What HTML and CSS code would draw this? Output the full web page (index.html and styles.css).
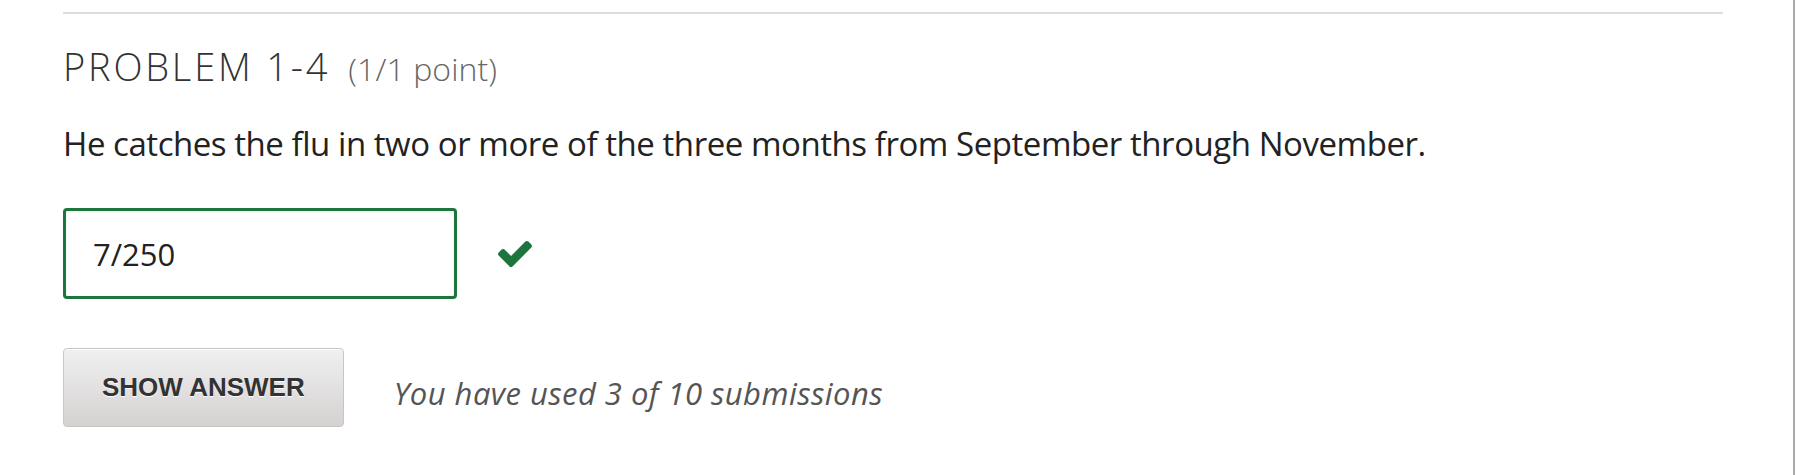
FILE: index.html
```html
<!DOCTYPE html>
<html lang="en">
<head>
<meta charset="utf-8">
<title>Problem 1-4</title>
<link rel="stylesheet" href="styles.css">
</head>
<body>
<div class="page">
  <main class="main">
    <div class="rule"></div>
    <h2 class="title">PROBLEM 1-4<span class="progress">(1/1 point)</span></h2>
    <p class="question">He catches the flu in two or more of the three months from September through November.</p>
    <div class="answer-row">
      <input class="answer-input" type="text" value="7/250">
      <svg class="check" width="34" height="26" viewBox="121 334 1550 1188" aria-hidden="true">
        <path d="M1671 566q0 40-28 68l-724 724-136 136q-28 28-68 28t-68-28l-136-136-362-362q-28-28-28-68t28-68l136-136q28-28 68-28t68 28l294 295 656-657q28-28 68-28t68 28l136 136q28 28 28 68z"/>
      </svg>
    </div>
    <div class="actions">
      <button class="btn" type="button">SHOW ANSWER</button>
      <span class="count">You have used 3 of 10 submissions</span>
    </div>
  </main>
  <div class="edge"></div>
</div>
</body>
</html>
```

FILE: styles.css
```css
html, body {
  margin: 0;
  padding: 0;
  background: #ffffff;
}

body {
  font-family: "Open Sans", "DejaVu Sans", sans-serif;
  overflow: hidden;
}

.page {
  display: flex;
  height: 475px;
}

.main {
  flex: 1;
  padding-left: 63px;
  padding-top: 12px;
}

.edge {
  width: 2px;
  background: #aaaaaa;
  margin-right: 1px;
}

.rule {
  width: 1660px;
  height: 2px;
  background: #dddddd;
}

.title {
  margin: 29px 0 0;
  font-size: 38px;
  line-height: 46px;
  font-weight: 350;
  letter-spacing: 2.8px;
  color: #333333;
}

.progress {
  margin-left: 18px;
  font-size: 32px;
  font-weight: 350;
  letter-spacing: 0.1px;
  color: #666666;
}

.question {
  margin: 32px 0 0;
  font-size: 33px;
  line-height: 40px;
  letter-spacing: -0.45px;
  color: #222222;
}

.answer-row {
  display: flex;
  align-items: center;
  gap: 41px;
  margin-top: 44px;
}

.answer-input {
  width: 394px;
  height: 91px;
  box-sizing: border-box;
  margin: 0;
  border: 3px solid #1b753c;
  border-radius: 4px;
  padding: 0 0 0 27px;
  font-family: "Open Sans", "DejaVu Sans", sans-serif;
  font-size: 31px;
  color: #222222;
  background: #ffffff;
  box-shadow: inset 0 1px 3px rgba(0, 0, 0, 0.08);
  outline: none;
}

.check {
  fill: #1b753c;
  display: block;
}

.actions {
  display: flex;
  align-items: flex-start;
  margin-top: 49px;
}

.btn {
  height: 79px;
  box-sizing: border-box;
  margin: 0;
  padding: 0 38px;
  border: 1px solid #c9c5c5;
  border-radius: 4px;
  background: linear-gradient(#f0f0f0, #d5d1d1);
  box-shadow: inset 0 1px 0 #ffffff;
  font-family: "Liberation Sans", Arial, sans-serif;
  font-weight: bold;
  font-size: 26px;
  color: #333333;
  text-shadow: 0 1px 0 #ffffff;
}

.count {
  margin-left: 50px;
  margin-top: 26px;
  font-style: italic;
  font-size: 31px;
  line-height: 38px;
  letter-spacing: 0.45px;
  color: #555555;
}
```
